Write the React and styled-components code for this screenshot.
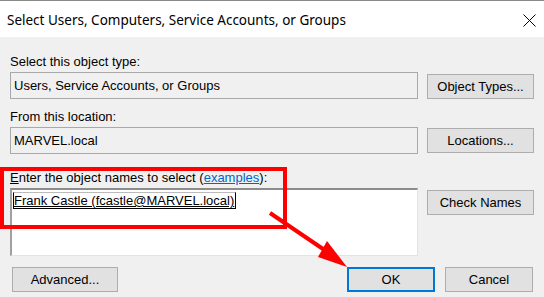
import React from 'react';
import styled, { createGlobalStyle } from 'styled-components';

const GlobalStyle = createGlobalStyle`
  html, body {
    margin: 0;
    padding: 0;
    background: #f0f0f0;
  }
  * {
    box-sizing: border-box;
  }
`;

const DialogWindow = styled.div`
  position: relative;
  width: 544px;
  height: 297px;
  background: #f0f0f0;
  border-top: 1px solid #8a8a8a;
  display: flex;
  flex-direction: column;
  font-family: 'Liberation Sans', Arial, sans-serif;
  font-size: 13px;
  color: #000;
  overflow: hidden;
`;

const TitleBar = styled.div`
  height: 36px;
  background: #fff;
  display: flex;
  align-items: center;
  justify-content: space-between;
  padding: 2px 8px 0 7px;
`;

const TitleText = styled.div`
  font-family: 'Noto Sans', 'Liberation Sans', sans-serif;
  font-size: 13.5px;
  color: #000;
`;

const CloseButton = styled.div`
  width: 14px;
  height: 14px;
  display: flex;
  align-items: center;
  justify-content: center;
`;

const DialogBody = styled.div`
  flex: 1;
  padding: 0 10px;
  display: flex;
  flex-direction: column;
`;

const FieldLabel = styled.div`
  height: 15px;
  line-height: 15px;
  margin-top: ${(p) => p.$top}px;
  white-space: nowrap;
`;

const FieldRow = styled.div`
  display: grid;
  grid-template-columns: 408px 107px;
  column-gap: 9px;
  align-items: start;
  margin-top: 3px;
`;

const ReadOnlyBox = styled.div`
  height: 27px;
  border: 1px solid #a9a9a9;
  background: #f0f0f0;
  padding-left: 3px;
  display: flex;
  align-items: center;
`;

const NamesBox = styled.div`
  height: 68px;
  background: #fff;
  border-top: 2px solid #8c8c8c;
  border-left: 2px solid #a0a0a0;
  border-right: 1px solid #e3e3e3;
  border-bottom: 1px solid #e3e3e3;
  padding: 2px 0 0 1px;
`;

const SelectedName = styled.span`
  display: inline-block;
  border: 1px solid #000;
  border-top-color: #bbb;
  padding: 0 1px 0 0;
  line-height: 15px;
  text-decoration: underline;
`;

const DialogButton = styled.div`
  height: 25px;
  margin-top: ${(p) => p.$top || 0}px;
  background: #e1e1e1;
  border: ${(p) => (p.$primary ? '2px solid #0078d7' : '1px solid #adadad')};
  display: flex;
  align-items: center;
  justify-content: center;
  white-space: nowrap;
`;

const Footer = styled.div`
  display: grid;
  grid-template-columns: 106px 1fr 88px 88px;
  column-gap: 10px;
  margin-top: 11px;
  padding: 0 1px 0 2px;
`;

const LinkText = styled.span`
  color: #0066cc;
  text-decoration: underline;
`;

const AccessKey = styled.span`
  text-decoration: underline;
`;

const Highlight = styled.div`
  position: absolute;
  left: 0;
  top: 166px;
  width: 287px;
  height: 62px;
  border: 4px solid #ff0000;
  pointer-events: none;
`;

const ArrowLayer = styled.svg`
  position: absolute;
  left: 0;
  top: 0;
  pointer-events: none;
`;

const App = () => {
  return (
    <>
      <GlobalStyle />
      <DialogWindow>
        <TitleBar>
          <TitleText>Select Users, Computers, Service Accounts, or Groups</TitleText>
          <CloseButton>
            <svg width="13" height="13" viewBox="0 0 13 13">
              <path d="M0.5 0.5 L12.5 12.5 M12.5 0.5 L0.5 12.5" stroke="#000" strokeWidth="1" />
            </svg>
          </CloseButton>
        </TitleBar>
        <DialogBody>
          <FieldLabel $top={17}>Select this object type:</FieldLabel>
          <FieldRow>
            <ReadOnlyBox>Users, Service Accounts, or Groups</ReadOnlyBox>
            <DialogButton $top={2}>Object Types...</DialogButton>
          </FieldRow>
          <FieldLabel $top={10}>From this location:</FieldLabel>
          <FieldRow>
            <ReadOnlyBox>MARVEL.local</ReadOnlyBox>
            <DialogButton $top={1}>Locations...</DialogButton>
          </FieldRow>
          <FieldLabel $top={16}>
            <AccessKey>E</AccessKey>nter the object names to select (<LinkText>examples</LinkText>):
          </FieldLabel>
          <FieldRow>
            <NamesBox>
              <SelectedName>Frank Castle (fcastle@MARVEL.local)</SelectedName>
            </NamesBox>
            <DialogButton $top={2}>Check Names</DialogButton>
          </FieldRow>
          <Footer>
            <DialogButton>Advanced...</DialogButton>
            <div />
            <DialogButton $primary>OK</DialogButton>
            <DialogButton>Cancel</DialogButton>
          </Footer>
        </DialogBody>
        <Highlight />
        <ArrowLayer width="544" height="297" viewBox="0 0 544 297">
          <line x1="270" y1="212" x2="326" y2="250" stroke="#ff0000" strokeWidth="4" />
          <polygon points="347,266 327,240 318,256" fill="#ff0000" />
        </ArrowLayer>
      </DialogWindow>
    </>
  );
};

export default App;
